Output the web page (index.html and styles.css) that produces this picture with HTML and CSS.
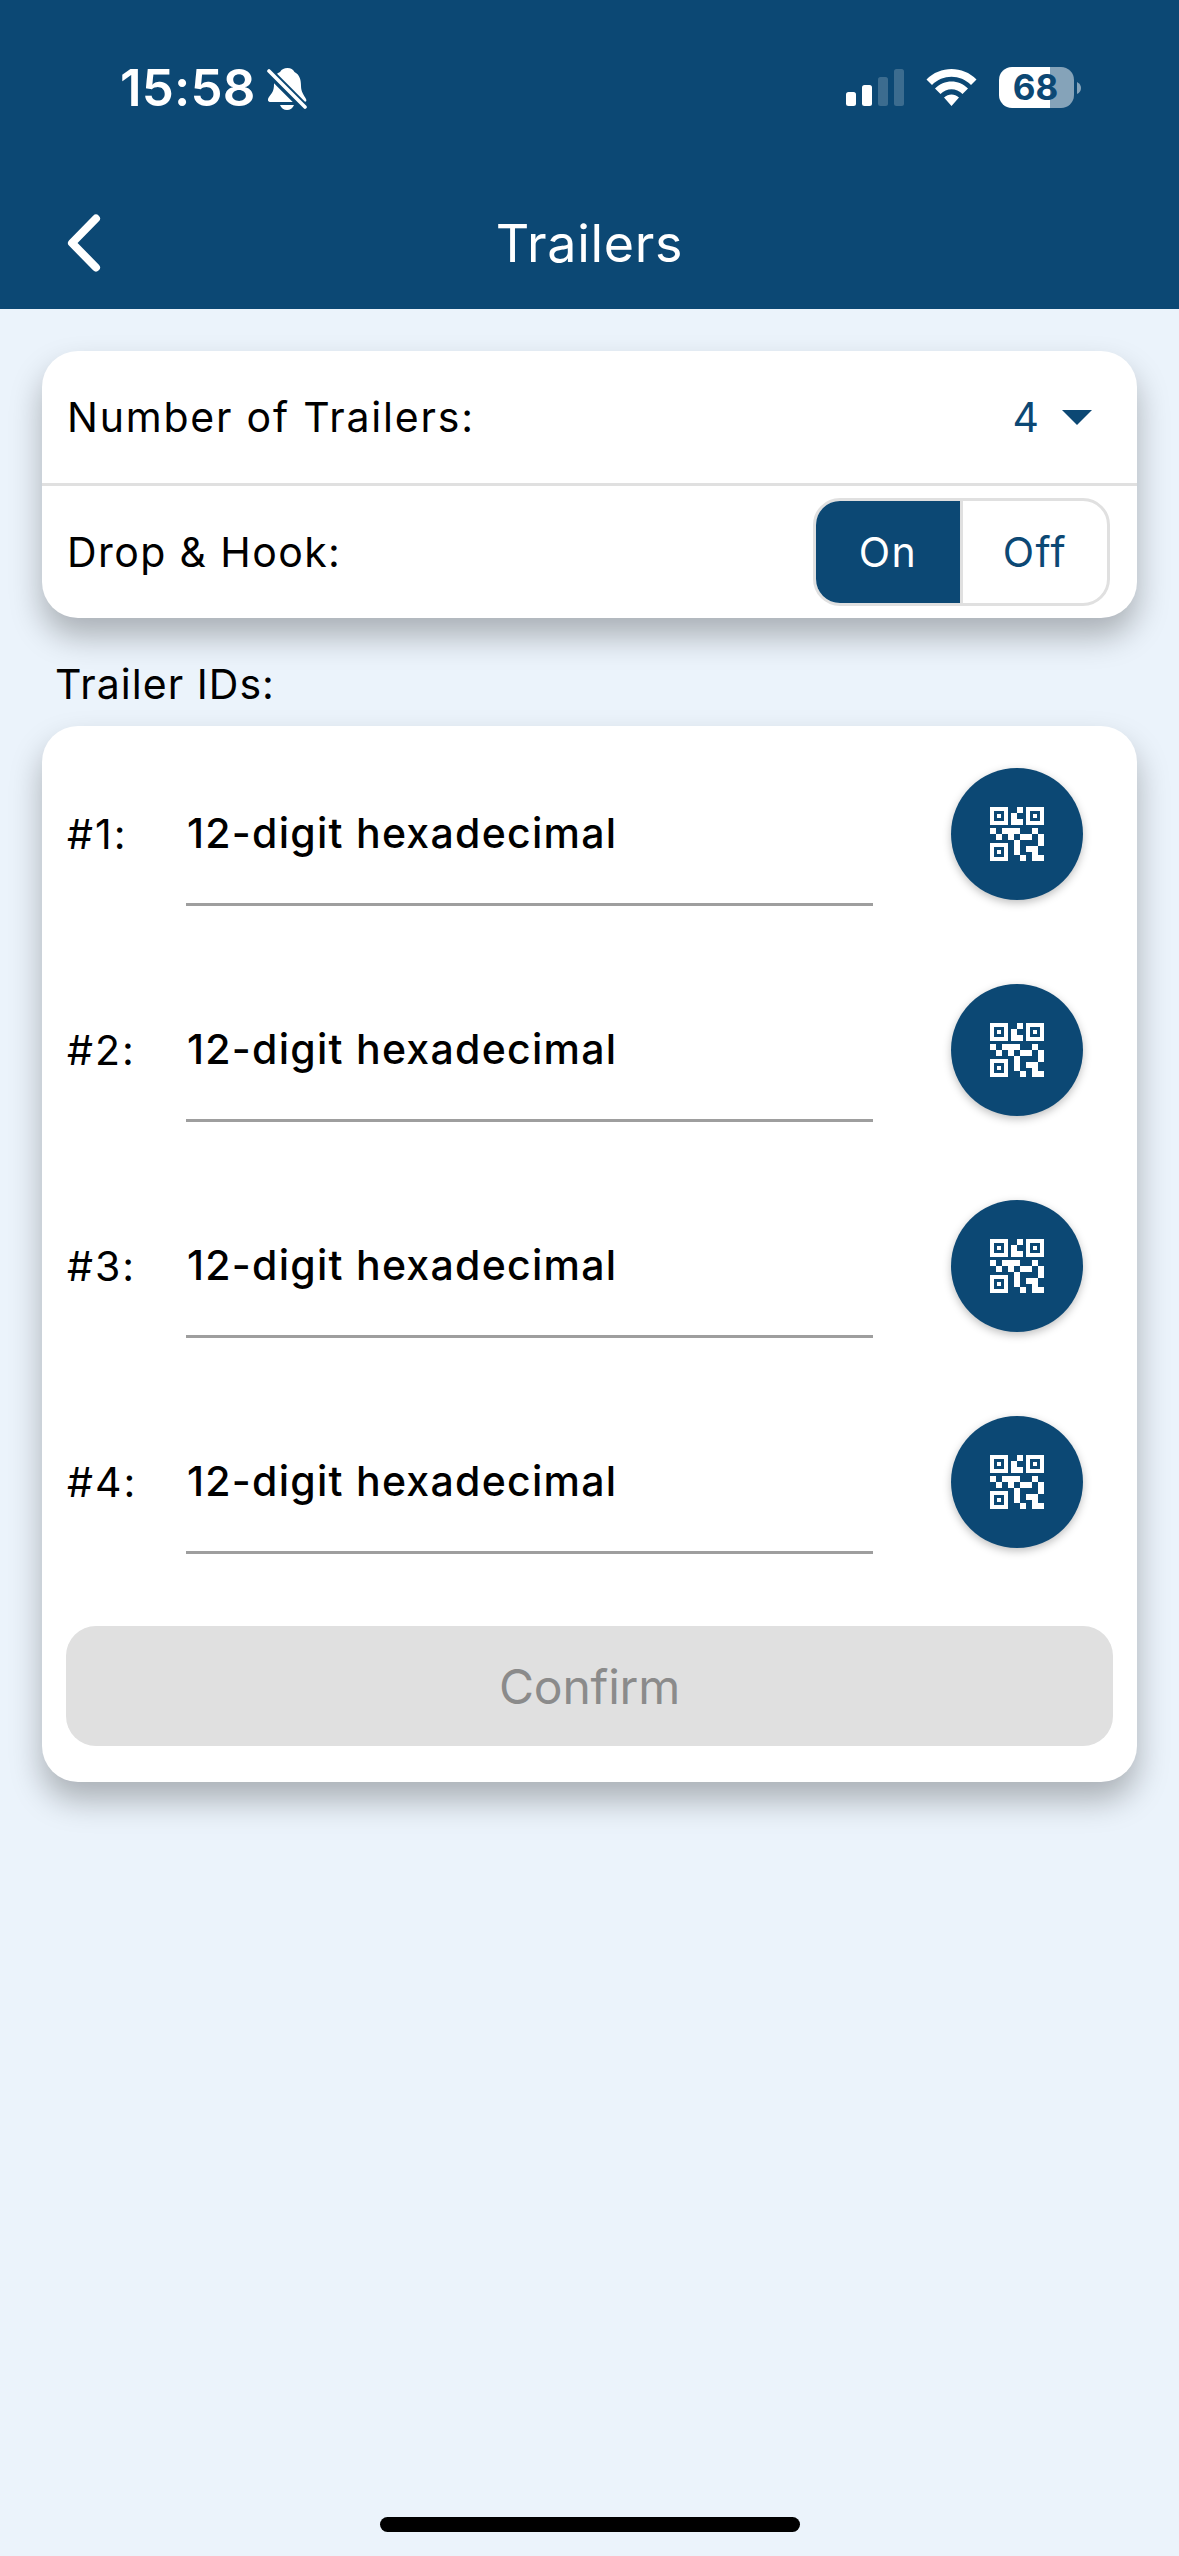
FILE: index.html
```html
<!DOCTYPE html>
<html lang="en">
<head>
<meta charset="utf-8">
<title>Trailers</title>
<link rel="stylesheet" href="styles.css">
</head>
<body>
<svg class="defs" aria-hidden="true">
  <symbol id="qr" viewBox="0 0 54 54">
    <path fill-rule="evenodd" d="M0 0h18v18H0zM4 4v10h10V4zM36 0h18v18H36zM40 4v10h10V4zM0 36h18v18H0zM4 40v10h10V40z"/>
    <path d="M7 7h4v4H7zM43 7h4v4h-4zM7 43h4v4H7zM27 0h6v6h-6zM21 6h6v6h6v6H21zM0 21h6v6H0zM6 27h6v6H6zM12 21h18v6h-6v6h-6v-6h-6zM30 27h12v6H30zM42 21h6v6h-6zM48 27h6v12h-6zM24 33h6v15h-6zM36 39h12v9h6v6H42v-9h-6zM30 48h6v6h-6z"/>
  </symbol>
</svg>
<div class="screen">
  <header class="header">
    <div class="status">
      <div class="status-left">
        <span class="time">15:58</span>
        <svg class="bell" width="42" height="46" viewBox="0 0 42 46">
          <path fill="#fff" d="M20.500 2C24 2 26 3.500 27.500 6C33 9 34 14 34 20C34 26 37 29 39 33C40 35 39 36 37 36H4C1 36 0 34 2 31C5 27 7 25 7 18C7 10 9 8 13 6C15 3 17 2 20.500 2ZM13 39H27C26 42 23 44 20 44S14 42 13 39Z"/>
          <path stroke="#0c4874" stroke-width="9" d="M-1 3L39 43"/>
          <path stroke="#fff" stroke-width="3.600" stroke-linecap="round" d="M2 5L38 41"/>
        </svg>
      </div>
      <div class="status-right">
        <svg width="58" height="38" viewBox="0 0 58 38" fill="#fff">
          <rect x="0" y="23" width="10" height="14" rx="2.500"/>
          <rect x="16" y="16" width="10" height="21" rx="2.500"/>
          <rect x="32" y="8" width="10" height="29" rx="2.500" opacity=".2"/>
          <rect x="48" y="0" width="10" height="37" rx="2.500" opacity=".2"/>
        </svg>
        <svg class="wifi" width="51" height="38" viewBox="0 0 51 38" fill="#fff">
          <path d="M0.500 10.500C14-3.500 37-3.500 50.500 10.500L45 16C34.500 5 16.500 5 6 16ZM9 19.500C18 10 33 10 42 19.500L36.500 25C30.500 18.500 20.500 18.500 14.500 25ZM18 28.500C22.500 24.500 28.500 24.500 33 28.500L25.500 37Z"/>
        </svg>
        <div class="battery">68</div>
        <svg class="nub" width="4" height="12" viewBox="0 0 4 12"><path fill="#fff" opacity=".5" d="M0 0Q4 2 4 6T0 12Z"/></svg>
      </div>
    </div>
    <div class="nav">
      <svg class="back" width="34" height="60" viewBox="0 0 34 60"><path fill="none" stroke="#fff" stroke-width="8" stroke-linecap="round" stroke-linejoin="round" d="M29 5.500L5 30L29 54.500"/></svg>
      <h1 class="title">Trailers</h1>
    </div>
  </header>

  <main class="content">
    <section class="card settings">
      <div class="row row-count">
        <span class="label l-count">Number of Trailers:</span>
        <span class="select"><span>4</span><svg width="30" height="15" viewBox="0 0 30 15"><path fill="#0c4874" d="M0 0H30L15 15Z"/></svg></span>
      </div>
      <div class="row row-hook">
        <span class="label l-hook">Drop &amp; Hook:</span>
        <div class="toggle"><span class="opt on">On</span><span class="opt off">Off</span></div>
      </div>
    </section>

    <h2 class="section-title">Trailer IDs:</h2>

    <section class="card ids">
      <div class="id-row"><span class="num">#1:</span><div class="field">12-digit hexadecimal</div><div class="scan"><svg width="54" height="54"><use href="#qr"/></svg></div></div>
      <div class="id-row"><span class="num">#2:</span><div class="field">12-digit hexadecimal</div><div class="scan"><svg width="54" height="54"><use href="#qr"/></svg></div></div>
      <div class="id-row"><span class="num">#3:</span><div class="field">12-digit hexadecimal</div><div class="scan"><svg width="54" height="54"><use href="#qr"/></svg></div></div>
      <div class="id-row"><span class="num">#4:</span><div class="field">12-digit hexadecimal</div><div class="scan"><svg width="54" height="54"><use href="#qr"/></svg></div></div>
      <div class="confirm">Confirm</div>
    </section>
  </main>
  <div class="home"></div>
</div>
</body>
</html>
```
FILE: styles.css
```css
* { box-sizing: border-box; }
body { margin: 0; font-family: Inter, "Liberation Sans", sans-serif; color: #000; }
.defs { display: none; }
svg { display: block; flex: none; }
.screen { width: 1179px; height: 2556px; background: #ebf3fb; display: flex; flex-direction: column; }

.header { height: 309px; background: #0c4874; color: #fff; }
.status { height: 177px; display: flex; justify-content: space-between; padding: 0 98px 0 120px; }
.status-left, .status-right { display: flex; align-items: flex-start; }
.time { font-size: 51px; font-weight: 600; line-height: 60px; padding-top: 58px; width: 147px; white-space: nowrap; letter-spacing: .2px; }
.bell { margin-top: 66px; }
.status-right { padding-top: 67px; }
.status-right > svg:first-child { margin-top: 2px; }
.wifi { margin: 2px 22px 0; }
.battery { width: 75px; height: 41px; border-radius: 13px; background: linear-gradient(90deg, #fff 51px, #85a3b9 51px); color: #0c4874; font-size: 35px; font-weight: 700; line-height: 41px; text-align: center; padding-right: 2px; }
.nub { margin: 15px 0 0 3px; }

.nav { height: 132px; display: grid; grid-template-columns: 100px 1fr 100px; align-items: start; }
.back { margin: 36px 0 0 67px; }
.title { margin: 36px 0 0; font-size: 52px; line-height: 62px; font-weight: 400; text-align: center; letter-spacing: .7px; }

.content { flex: 1; padding: 42px 42px 0; }
.card { background: #fff; border-radius: 36px; box-shadow: 0 18px 32px rgba(0,0,0,.28); }
.label { font-size: 41px; line-height: 50px; white-space: nowrap; }
.row { display: flex; justify-content: space-between; align-items: center; padding-left: 25px; }
.row-count { height: 135px; border-bottom: 3px solid #e0e0e0; padding-right: 45px; }
.row-hook { height: 132px; padding-right: 27px; }
.l-count { letter-spacing: 1.8px; }
.l-hook { letter-spacing: 1.4px; }
.select { display: flex; align-items: center; gap: 23px; color: #0c4874; font-size: 41px; line-height: 50px; }
.toggle { width: 297px; height: 108px; border: 3px solid #e0e0e0; border-radius: 27px; display: flex; overflow: hidden; }
.opt { flex: 1; font-size: 41px; line-height: 102px; text-align: center; letter-spacing: 1.5px; }
.on { background: #0c4874; color: #fff; border-right: 3px solid #e0e0e0; flex: 0 0 147px; }
.off { color: #0c4874; }

.section-title { margin: 0; height: 108px; padding: 41px 0 0 13px; font-size: 41px; line-height: 50px; font-weight: 400; letter-spacing: 1.05px; }

.ids { height: 1056px; padding: 42px 24px 36px; }
.id-row { height: 216px; display: flex; align-items: flex-start; }
.num { width: 120px; padding-left: 1px; font-size: 41px; line-height: 50px; margin-top: 41px; letter-spacing: 2px; }
.field { width: 687px; height: 138px; border-bottom: 3px solid #9e9e9e; padding: 40px 0 0 1px; font-size: 41px; line-height: 50px; font-weight: 500; letter-spacing: 1.27px; }
.scan { width: 132px; height: 132px; margin-left: 78px; border-radius: 50%; background: #0c4874; fill: #fff; display: flex; align-items: center; justify-content: center; box-shadow: 0 3px 8px rgba(0,0,0,.25); }
.confirm { height: 120px; margin-top: -6px; border-radius: 30px; background: #e0e0e0; color: #8b8b8b; font-size: 48px; line-height: 121px; text-align: center; letter-spacing: -.2px; }
.home { width: 420px; height: 15px; border-radius: 8px; background: #000; margin: 0 auto 24px; }
```
